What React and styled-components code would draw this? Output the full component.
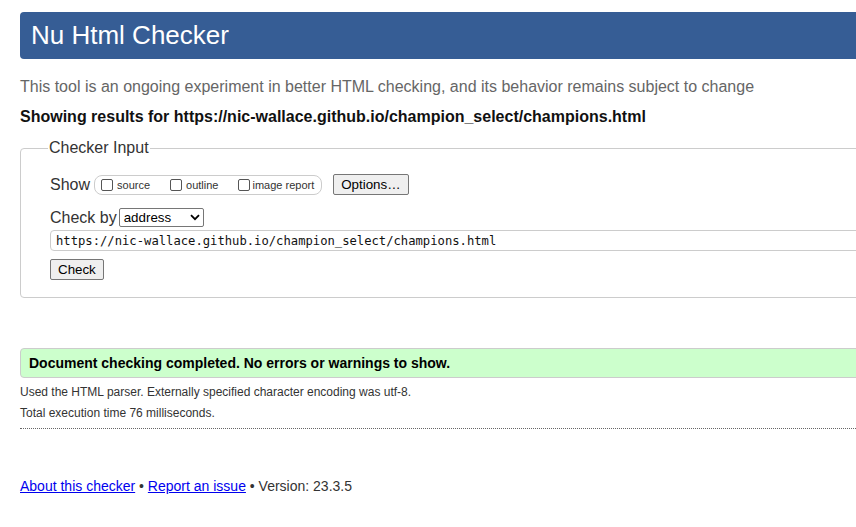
import React from "react";
import styled, { createGlobalStyle } from "styled-components";

const Global = createGlobalStyle`
  html, body { margin: 0; padding: 0; background: #fff; overflow: hidden; }
  body { font-family: "Liberation Sans", Arial, sans-serif; color: #222; }
`;

const Page = styled.div`
  width: 1100px;
  padding: 12px 0 0 20px;
  box-sizing: border-box;
`;

const Header = styled.h1`
  margin: 0;
  height: 47px;
  display: flex;
  align-items: center;
  padding: 0 11px 0;
  box-sizing: border-box;
  background: #365d95;
  color: #fff;
  font-weight: normal;
  font-size: 26px;
  border-radius: 4px;
`;

const Tagline = styled.p`
  margin: 18px 0 0;
  font-size: 16px;
  line-height: 20px;
  color: #666;
`;

const Showing = styled.p`
  margin: 10px 0 0;
  font-size: 16px;
  line-height: 20px;
  font-weight: bold;
  color: #111;
`;

const Fieldset = styled.fieldset`
  margin: 12px 0 0;
  padding: 17px 29px 17px;
  border: 1px solid #ccc;
  border-radius: 4px;
  min-width: 0;
`;

const Legend = styled.legend`
  padding: 0 1px;
  margin-left: -2px;
  font-size: 16px;
  color: #333;
`;

const Row = styled.div`
  display: flex;
  align-items: center;
  gap: ${(p) => p.$gap || 0}px;
  margin-top: ${(p) => p.$mt || 0}px;
  font-size: 16px;
  color: #333;
`;

const Group = styled.span`
  display: inline-flex;
  align-items: center;
  height: 18px;
  padding: 0 7px 0 6px;
  margin-left: 4px;
  border: 1px solid #ccc;
  border-radius: 8px;
`;

const Opt = styled.label`
  display: inline-flex;
  align-items: center;
  font-size: 11px;
  color: #333;
  margin-right: ${(p) => p.$mr || 0}px;
`;

const Box = styled.span`
  width: 12px;
  height: 12px;
  border: 1px solid #555;
  border-radius: 2px;
  margin-right: ${(p) => p.$gap || 3}px;
  box-sizing: border-box;
`;

const Button = styled.button`
  font-family: "Liberation Sans", Arial, sans-serif;
  font-size: 13.33px;
  height: 21px;
  padding: 0 7px;
  background: #efefef;
  border: 1px solid #767676;
  border-radius: 2px;
  color: #000;
  margin-left: ${(p) => p.$ml || 0}px;
`;

const Select = styled.span`
  display: inline-flex;
  align-items: center;
  justify-content: space-between;
  width: 85px;
  height: 19px;
  box-sizing: border-box;
  margin-left: 2px;
  padding: 0 3px 0 4px;
  border: 1px solid #767676;
  border-radius: 2px;
  font-size: 13.33px;
  color: #000;
`;

const UrlInput = styled.div`
  margin-top: 3px;
  height: 21px;
  box-sizing: border-box;
  display: flex;
  align-items: center;
  padding: 0 5px;
  border: 1px solid #ccc;
  border-radius: 4px;
  font-family: "DejaVu Sans Mono", monospace;
  font-size: 12.2px;
  color: #111;
`;

const Result = styled.div`
  margin-top: 50px;
  height: 30px;
  box-sizing: border-box;
  display: flex;
  align-items: center;
  padding: 0 8px;
  background: #ccffcc;
  border: 1px solid #ccc;
  border-radius: 4px;
  font-size: 14px;
  font-weight: bold;
  color: #000;
`;

const Note = styled.p`
  margin: ${(p) => p.$mt || 0}px 0 0;
  font-size: 12px;
  line-height: 14px;
  color: #333;
`;

const Rule = styled.hr`
  margin: 8px 0 0;
  border: 0;
  border-top: 1px dotted #666;
`;

const Footer = styled.p`
  margin: 49px 0 0;
  font-size: 14px;
  line-height: 16px;
  color: #333;
`;

const Link = styled.a`
  color: #0000ee;
  text-decoration: underline;
`;

export default function App() {
  return (
    <>
      <Global />
      <Page>
        <Header>Nu Html Checker</Header>
        <Tagline>
          This tool is an ongoing experiment in better HTML checking, and its behavior remains subject to change
        </Tagline>
        <Showing>Showing results for https://nic-wallace.github.io/champion_select/champions.html</Showing>
        <Fieldset>
          <Legend>Checker Input</Legend>
          <Row>
            Show
            <Group>
              <Opt $mr={20}>
                <Box $gap={4} />source
              </Opt>
              <Opt $mr={20}>
                <Box $gap={4} />outline
              </Opt>
              <Opt>
                <Box $gap={2} />image report
              </Opt>
            </Group>
            <Button $ml={11}>Options…</Button>
          </Row>
          <Row $mt={13}>
            Check by
            <Select>
              address
              <svg width="10" height="7" viewBox="0 0 10 7">
                <path d="M1 1.2 L5 5.2 L9 1.2" fill="none" stroke="#000" strokeWidth="1.8" />
              </svg>
            </Select>
          </Row>
          <UrlInput>https://nic-wallace.github.io/champion_select/champions.html</UrlInput>
          <Row $mt={8}>
            <Button>Check</Button>
          </Row>
        </Fieldset>
        <Result>Document checking completed. No errors or warnings to show.</Result>
        <Note $mt={7}>Used the HTML parser. Externally specified character encoding was utf-8.</Note>
        <Note $mt={7}>Total execution time 76 milliseconds.</Note>
        <Rule />
        <Footer>
          <Link href="#">About this checker</Link> • <Link href="#">Report an issue</Link> • Version: 23.3.5
        </Footer>
      </Page>
    </>
  );
}
